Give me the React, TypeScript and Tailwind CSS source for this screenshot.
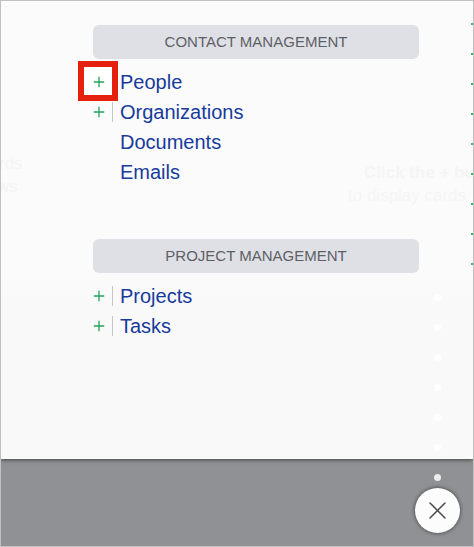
type Item = { label: string; canAdd: boolean; highlighted?: boolean };
type Section = { title: string; items: Item[] };

const sections: Section[] = [
  {
    title: "CONTACT MANAGEMENT",
    items: [
      { label: "People", canAdd: true, highlighted: true },
      { label: "Organizations", canAdd: true },
      { label: "Documents", canAdd: false },
      { label: "Emails", canAdd: false },
    ],
  },
  {
    title: "PROJECT MANAGEMENT",
    items: [
      { label: "Projects", canAdd: true },
      { label: "Tasks", canAdd: true },
    ],
  },
];

function MenuRow({ item }: { item: Item }) {
  return (
    <li className="flex h-[30px] items-center">
      {item.canAdd && (
        <button
          type="button"
          aria-label={`Add ${item.label}`}
          className="relative flex h-5 w-5 items-center justify-start border-r border-[#c4c6ca] text-[#23a455]"
        >
          {item.highlighted && (
            <span className="absolute -top-[11px] -left-[15px] h-10 w-10 border-6 border-[#e5200f] bg-white" />
          )}
          <svg viewBox="0 0 12 12" className="relative h-3 w-3" fill="none" stroke="currentColor" strokeWidth="1.3">
            <path d="M6 .8v10.4M.8 6h10.4" />
          </svg>
        </button>
      )}
      <a href="#" className={item.canAdd ? "ml-[7px]" : "ml-[27px]"}>
        {item.label}
      </a>
    </li>
  );
}

function MenuSection({ section }: { section: Section }) {
  return (
    <section>
      <h2 className="flex h-[34px] items-center justify-center rounded-md bg-[#dfe0e5] text-[15px] text-[#5d5f66]">
        {section.title}
      </h2>
      <ul className="mt-2 text-xl text-[#173a9b]">
        {section.items.map((item) => (
          <MenuRow key={item.label} item={item} />
        ))}
      </ul>
    </section>
  );
}

export default function App() {
  return (
    <div className="relative flex min-h-screen flex-col overflow-hidden border border-[#c0c0c0] bg-[#909194] font-['Liberation_Sans',Arial,sans-serif]">
      <main className="relative bg-linear-to-b from-[#fbfbfb] from-60% to-[#f9f9f9] to-65% pt-6 pr-[54px] pb-[118px] pl-[92px] shadow-[0_1px_4px_rgba(0,0,0,0.55)]">
        <div aria-hidden="true" className="absolute top-[151px] left-0 text-[17px] leading-[23px] text-[#f5f5f5]">
          <p className="-ml-0.5">rds</p>
          <p className="-ml-1">ws</p>
        </div>
        <div
          aria-hidden="true"
          className="absolute top-[160px] right-0 w-[125px] overflow-hidden text-[17px] leading-[23px] whitespace-nowrap text-[#f5f5f5]"
        >
          <p className="pl-4 font-bold">Click the + bu</p>
          <p>to display cards</p>
        </div>
        <div aria-hidden="true" className="absolute top-[22px] right-0 flex flex-col gap-7">
          {Array.from({ length: 9 }, (_, i) => (
            <span key={i} className="h-0.5 w-0.5 bg-[#35b56a]" />
          ))}
        </div>
        <nav className="relative flex flex-col gap-[52px]">
          {sections.map((section) => (
            <MenuSection key={section.title} section={section} />
          ))}
        </nav>
      </main>

      <div className="absolute right-[13px] bottom-[13px] flex flex-col items-center">
        <div aria-hidden="true" className="mb-[7px] flex flex-col gap-[23px]">
          {Array.from({ length: 7 }, (_, i) => (
            <span key={i} className={`h-[7px] w-[7px] rounded-full ${i === 6 ? "bg-[#ececec]" : "bg-white"}`} />
          ))}
        </div>
        <button
          type="button"
          aria-label="Close"
          className="flex h-[45px] w-[45px] items-center justify-center rounded-full bg-[#fcfcfc] text-[#4a4b4f] shadow-[0_0_4px_rgba(0,0,0,0.6)]"
        >
          <svg viewBox="0 0 17 17" className="h-[17px] w-[17px]" fill="none" stroke="currentColor" strokeWidth="1.5" strokeLinecap="round">
            <path d="M1 1l15 15M16 1L1 16" />
          </svg>
        </button>
      </div>
    </div>
  );
}
